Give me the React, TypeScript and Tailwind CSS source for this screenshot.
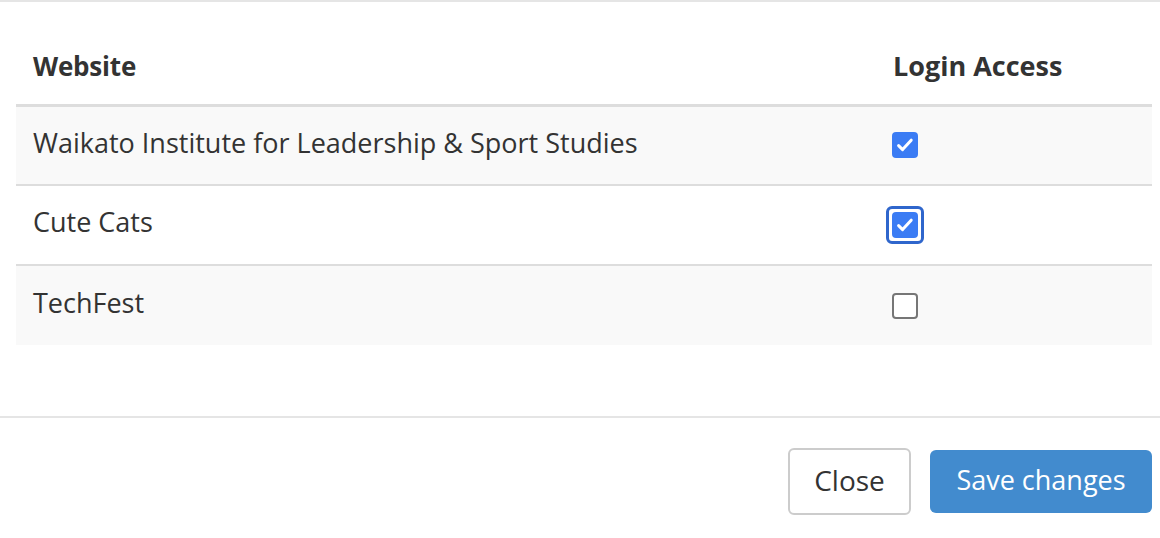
import React, { useState } from 'react';

type Site = { name: string; access: boolean; focused?: boolean };

const initialSites: Site[] = [
    { name: 'Waikato Institute for Leadership & Sport Studies', access: true },
    { name: 'Cute Cats', access: true, focused: true },
    { name: 'TechFest', access: false },
];

function CheckBox({ checked, focused, onToggle }: { checked: boolean; focused?: boolean; onToggle: () => void }) {
    return (
        <button
            type="button"
            onClick={onToggle}
            className={`flex h-[38px] w-[38px] items-center justify-center rounded-[6px] border-[3px] ${focused ? 'border-[#2f66cc]' : 'border-transparent'}`}
        >
            {checked ? (
                <span className="flex h-[26px] w-[26px] items-center justify-center rounded-[4px] bg-[#3b7cf4]">
                    <svg width="20" height="20" viewBox="0 0 20 20" fill="none">
                        <path d="M3.6 10.6l4 4L16.2 5.2" stroke="white" strokeWidth="3" strokeLinecap="round" strokeLinejoin="round" />
                    </svg>
                </span>
            ) : (
                <span className="h-[26px] w-[26px] rounded-[4px] border-2 border-[#767676] bg-white" />
            )}
        </button>
    );
}

export default function App() {
    const [sites, setSites] = useState<Site[]>(initialSites);

    const toggle = (index: number) => {
        setSites(sites.map((site, i) => (i === index ? { ...site, access: !site.access } : site)));
    };

    return (
        <div className="h-[538px] w-[1160px] bg-white text-[#333] font-['Open_Sans',sans-serif]">
            <div className="border-t-2 border-[#e5e5e5] pt-[33px] pb-[71px] pl-[16px] pr-[8px]">
                <table className="w-full border-collapse">
                    <thead>
                        <tr className="border-b-[3px] border-[#dddddd]">
                            <th className="h-[70px] px-[17px] pb-[6px] text-left text-[26px] font-bold tracking-[-0.2px]">Website</th>
                            <th className="w-[260px] px-[1px] pb-[6px] text-left text-[27px] font-bold">Login Access</th>
                        </tr>
                    </thead>
                    <tbody>
                        {sites.map((site, i) => (
                            <tr key={site.name} className={`h-[80px] ${i > 0 ? 'border-t-2 border-[#dddddd]' : ''} ${i % 2 === 0 ? 'bg-[#f9f9f9]' : 'bg-white'}`}>
                                <td className="px-[17px] pb-[5px] align-middle text-[27px]">{site.name}</td>
                                <td className="align-middle">
                                    <div className="-ml-[6px]">
                                        <CheckBox checked={site.access} focused={site.focused} onToggle={() => toggle(i)} />
                                    </div>
                                </td>
                            </tr>
                        ))}
                    </tbody>
                </table>
            </div>
            <div className="flex justify-end gap-[19px] border-t-2 border-[#e5e5e5] pt-[30px] pr-[8px]">
                <button className="h-[67px] w-[123px] rounded-[6px] border-2 border-[#cccccc] bg-white pb-[3px] text-[28px] text-[#333]">Close</button>
                <button className="mt-[2px] h-[63px] w-[222px] rounded-[6px] bg-[#428bce] pb-[3px] text-[27px] text-white">Save changes</button>
            </div>
        </div>
    );
}
